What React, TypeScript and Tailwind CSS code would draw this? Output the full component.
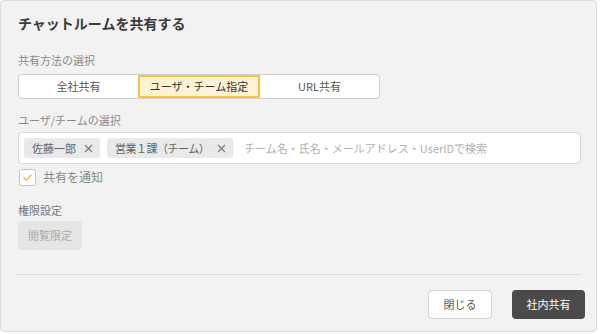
import React from "react";

const font = { fontFamily: '"Noto Sans CJK JP", "Noto Sans", sans-serif' };

function Chip({ label, tight }: { label: string; tight?: boolean }) {
  return (
    <div className="flex h-[20px] items-center gap-[8px] rounded-[3px] bg-[#e9e9e9] pl-[8px] pr-[7px] text-[11px] text-[#666]">
      <span className={tight ? "tracking-[-0.5px]" : ""}>{label}</span>
      <svg width="9" height="9" viewBox="0 0 9 9" className="text-[#777]">
        <path d="M1 1L8 8M8 1L1 8" stroke="currentColor" strokeWidth="1.1" fill="none" />
      </svg>
    </div>
  );
}

export default function App() {
  return (
    <div className="h-[334px] w-[600px] bg-white" style={font}>
      <div className="flex h-[332px] w-[597px] flex-col rounded-[4px] border border-[#dcdcdc] bg-[#f2f2f2]">
        <div className="px-[17px] pt-[13px] text-[14px] font-bold leading-[18px] text-[#3a3a3a]">
          チャットルームを共有する
        </div>
        <div className="px-[17px] pt-[21px] text-[11px] leading-[14px] text-[#8a8a8a]">共有方法の選択</div>
        <div className="mx-[17px] mt-[7px] flex h-[25px] w-[362px] overflow-hidden rounded-[4px] border border-[#cfcfcf] bg-white text-[11px] text-[#555]">
          <div className="flex flex-1 items-center justify-center">全社共有</div>
          <div className="flex w-[122px] items-center justify-center border-2 border-[#f5c445] bg-[#fcf2d4] text-[#333]">
            ユーザ・チーム指定
          </div>
          <div className="flex flex-1 items-center justify-center">URL共有</div>
        </div>
        <div className="px-[17px] pt-[14px] text-[11px] leading-[14px] text-[#8a8a8a]">ユーザ/チームの選択</div>
        <div className="ml-[17px] mr-[15px] mt-[5px] flex h-[32px] items-center gap-[7px] rounded-[4px] border border-[#d9d9d9] bg-white px-[5px]">
          <Chip label="佐藤一郎" />
          <Chip label="営業１課（チーム）" tight />
          <span className="ml-[4px] text-[11px] text-[#b0b0b0]">
            チーム名・氏名・メールアドレス・UserIDで検索
          </span>
        </div>
        <div className="mx-[18px] mt-[4px] flex items-center gap-[7px]">
          <div className="flex h-[17px] w-[17px] items-center justify-center rounded-[3px] border border-[#f5c445] bg-white">
            <svg width="11" height="9" viewBox="0 0 11 9">
              <path d="M1.5 4.5L4.3 7.2L9.5 1.8" stroke="#f0b92e" strokeWidth="1.3" fill="none" />
            </svg>
          </div>
          <span className="text-[12px] text-[#888]">共有を通知</span>
        </div>
        <div className="px-[17px] pt-[17px] text-[11px] leading-[14px] text-[#777]">権限設定</div>
        <div className="mx-[17px] mt-[4px] flex h-[29px] w-[64px] items-center justify-center rounded-[4px] bg-[#e5e5e5] text-[11px] text-[#aaa]">
          閲覧限定
        </div>
        <div className="mx-[14px] mt-[24px] h-px bg-[#dcdde0]" />
        <div className="flex justify-end gap-[20px] px-[11px] pt-[15px]">
          <div className="flex h-[29px] w-[64px] items-center justify-center rounded-[4px] border border-[#d2d2d2] bg-white text-[11px] text-[#555]">
            閉じる
          </div>
          <div className="flex h-[29px] w-[73px] items-center justify-center rounded-[4px] bg-[#4a4a4a] text-[11px] text-white">
            社内共有
          </div>
        </div>
      </div>
    </div>
  );
}
